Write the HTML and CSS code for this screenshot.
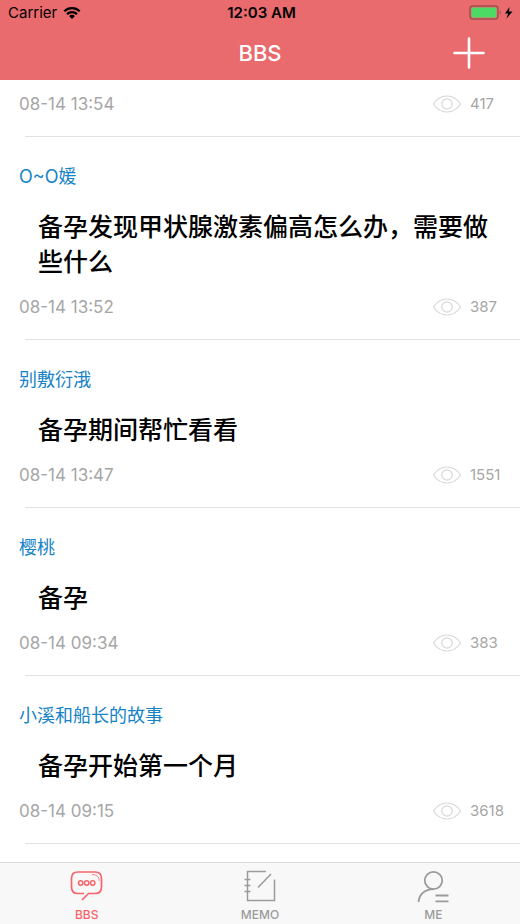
FILE: index.html
```html
<!DOCTYPE html>
<html lang="zh-CN">
<head>
<meta charset="utf-8">
<meta name="viewport" content="width=device-width, initial-scale=1">
<title>BBS</title>
<link rel="stylesheet" href="styles.css">
</head>
<body>
<svg class="defs" width="0" height="0" aria-hidden="true">
  <symbol id="eye" viewBox="0 0 30 20">
    <path d="M1.500 10C5 4.500 9.500 2 15 2s10 2.500 13.500 8C25 15.500 20.500 18 15 18S5 15.500 1.500 10z"/>
    <circle cx="15" cy="10" r="5.200"/>
  </symbol>
</svg>
<header class="header">
  <div class="status">
    <div class="carrier">
      <span>Carrier</span>
      <svg width="18" height="14" viewBox="0 0 18 14" aria-hidden="true">
        <path d="M1.300 5.300a11 11 0 0 1 15.400 0M4 8.200a7.200 7.200 0 0 1 10 0" fill="none" stroke="#000" stroke-width="2.300"/>
        <path d="M9 13L6 10.100a4.300 4.300 0 0 1 6 0z"/>
      </svg>
    </div>
    <div class="time">12:03 AM</div>
    <div class="battery">
      <svg width="46" height="16" viewBox="0 0 46 16" aria-hidden="true">
        <rect x="1" y="1" width="28" height="13" rx="3" fill="none" stroke="#a34b4f" stroke-width="1.400"/>
        <rect x="2.500" y="2.500" width="25" height="10" rx="1" fill="#4cd964"/>
        <path d="M30.800 5.500q2 2 0 4z" fill="#a34b4f"/>
        <path d="M40.500 2l-4.500 6.500h3.200L37.500 13.500l6-7h-3.500z"/>
      </svg>
    </div>
  </div>
  <div class="nav">
    <h1>BBS</h1>
    <button class="add" type="button" aria-label="Add">
      <svg width="32" height="32" viewBox="0 0 32 32" aria-hidden="true"><path d="M16 1.500v29M1.500 16h29" stroke="#fff" stroke-width="2.600" stroke-linecap="round"/></svg>
    </button>
  </div>
</header>
<main class="list">
  <article class="post post-cut">
    <div class="meta"><time>08-14 13:54</time><span class="views"><svg class="eye"><use href="#eye"/></svg><span>417</span></span></div>
  </article>
  <article class="post">
    <a class="author" href="#">O~O媛</a>
    <h2>备孕发现甲状腺激素偏高怎么办，需要做些什么</h2>
    <div class="meta"><time>08-14 13:52</time><span class="views"><svg class="eye"><use href="#eye"/></svg><span>387</span></span></div>
  </article>
  <article class="post">
    <a class="author" href="#">别敷衍涐</a>
    <h2>备孕期间帮忙看看</h2>
    <div class="meta"><time>08-14 13:47</time><span class="views"><svg class="eye"><use href="#eye"/></svg><span>1551</span></span></div>
  </article>
  <article class="post">
    <a class="author" href="#">樱桃</a>
    <h2>备孕</h2>
    <div class="meta"><time>08-14 09:34</time><span class="views"><svg class="eye"><use href="#eye"/></svg><span>383</span></span></div>
  </article>
  <article class="post">
    <a class="author" href="#">小溪和船长的故事</a>
    <h2>备孕开始第一个月</h2>
    <div class="meta"><time>08-14 09:15</time><span class="views"><svg class="eye"><use href="#eye"/></svg><span>3618</span></span></div>
  </article>
</main>
<nav class="tabs">
  <a class="tab active" href="#">
    <svg width="34" height="34" viewBox="0 0 34 34" aria-hidden="true">
      <path d="M14 24.500H8Q1.500 24.500 1.500 18V9.500Q1.500 3 8 3h17Q31.500 3 31.500 9.500V18q0 6.500-6.500 6.500H18.500L12 31" stroke-width="1.700"/>
      <path d="M22 5.500q7 0 7.300 6.500" stroke-width=".8"/>
      <g stroke-width="1.500"><circle cx="10.700" cy="14" r="2.200"/><circle cx="16.700" cy="14" r="2.200"/><circle cx="22.700" cy="14" r="2.200"/></g>
    </svg>
    <span>BBS</span>
  </a>
  <a class="tab" href="#">
    <svg width="34" height="34" viewBox="0 0 34 34" aria-hidden="true">
      <path d="M23 2.500H4.500v29H31.500V10.500M28 5L15 18.500M1.500 10.500h6M1.500 16.500h6M1.500 22.500h6" stroke-width="1.500"/>
    </svg>
    <span>MEMO</span>
  </a>
  <a class="tab" href="#">
    <svg width="34" height="34" viewBox="0 0 34 34" aria-hidden="true">
      <circle cx="17.500" cy="11.500" r="8.700" stroke-width="1.800"/>
      <path d="M17.500 20.200C9 20.500 3.500 25 2.500 33M19.500 26.500H32.500M19.500 32.300H32.500" stroke-width="1.800"/>
    </svg>
    <span>ME</span>
  </a>
</nav>
</body>
</html>
```
FILE: styles.css
```css
* { box-sizing: border-box; }

body {
  margin: 0;
  height: 100vh;
  display: flex;
  flex-direction: column;
  overflow: hidden;
  background: #fff;
  color: #000;
  font-family: Inter, "Noto Sans CJK SC", sans-serif;
}

a { text-decoration: none; }
svg { display: block; }
h1, h2 { margin: 0; font-weight: 500; }
.defs { position: absolute; }

.header {
  flex: none;
  background: #e96b6e;
}

.status {
  display: grid;
  grid-template-columns: 1fr auto 1fr;
  align-items: center;
  height: 26px;
  padding: 0 5px 0 8px;
  font-size: 15px;
  line-height: 26px;
}

.carrier {
  display: flex;
  align-items: center;
  gap: 6px;
}

.time { font-weight: 600; }
.battery { justify-self: end; }

.nav {
  display: grid;
  grid-template-columns: 1fr auto 1fr;
  align-items: center;
  height: 54px;
  padding: 0 35px;
}

.nav h1 {
  grid-column: 2;
  color: #fff;
  font-size: 22px;
  line-height: 28px;
}

.add {
  justify-self: end;
  padding: 0;
  border: 0;
  background: none;
}

.list {
  flex: 1;
  min-height: 0;
  overflow: hidden;
}

.post {
  margin-left: 25px;
  padding: 28px 0 20px;
  border-bottom: 1px solid #e2e2e2;
}

.post-cut { padding-top: 12px; }

.author {
  display: block;
  margin-left: -6px;
  color: #1583c6;
  font-size: 18px;
  line-height: 24px;
}

.post h2 {
  margin: 21px 16px 15px 13px;
  font-size: 25px;
  line-height: 35px;
}

.meta {
  display: flex;
  justify-content: space-between;
  margin-left: -6px;
  color: #a6a6a6;
  font-size: 17px;
  line-height: 24px;
}

.views {
  display: flex;
  align-items: center;
  gap: 8px;
  width: 88px;
  font-size: 15px;
}

.eye {
  width: 30px;
  height: 20px;
  fill: none;
  stroke: #d6d6d6;
  stroke-width: 1.2px;
}

.tabs {
  flex: none;
  display: grid;
  grid-template-columns: repeat(3, 1fr);
  border-top: 1px solid #dcdcdc;
  background: #f8f8f8;
}

.tab {
  display: flex;
  flex-direction: column;
  align-items: center;
  gap: 4px;
  padding: 6px 0 1px;
  color: #9b9b9b;
  font-size: 12px;
  font-weight: 500;
  line-height: 16px;
}

.tab svg {
  fill: none;
  stroke: currentColor;
}

.active { color: #f5656b; }
```
